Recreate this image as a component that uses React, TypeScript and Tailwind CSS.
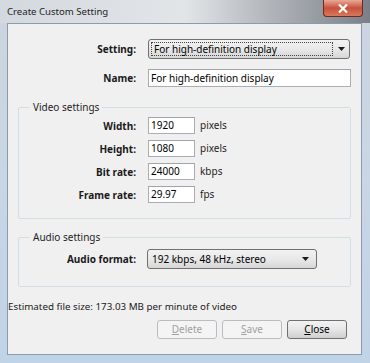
import React from 'react';

const font = { fontFamily: '"Noto Sans", "Open Sans", sans-serif' };

function Label({ children, width }: { children: React.ReactNode; width: string }) {
  return <div className={`${width} text-right font-bold text-[10px] leading-none text-[#1a1a1a]`}>{children}</div>;
}

function TextBox({ value, className }: { value: string; className: string }) {
  return (
    <div className={`${className} flex items-center border border-[#abadb3] border-t-[#a0a3aa] bg-white pl-[2px] text-[10px] text-black`}>
      {value}
    </div>
  );
}

function ComboArrow() {
  return (
    <svg width="7" height="4" viewBox="0 0 7 4">
      <path d="M0 0h7L3.5 4z" fill="#1c1c1c" />
    </svg>
  );
}

function WinButton({ label, accel, disabled }: { label: string; accel: string; disabled?: boolean }) {
  const rest = label.slice(1);
  return (
    <div
      className={
        disabled
          ? 'w-[60px] h-[19px] rounded-[3px] border border-[#b9bdc1] bg-[#f4f4f4] flex items-center justify-center text-[10px] text-[#a0a0a0]'
          : 'w-[60px] h-[19px] rounded-[3px] border border-[#707070] bg-gradient-to-b from-[#f3f3f3] via-[#e6e6e6] to-[#cfcfcf] flex items-center justify-center text-[10px] text-black'
      }
    >
      <span>
        <span className="underline">{accel}</span>
        {rest}
      </span>
    </div>
  );
}

export default function App() {
  const videoRows = [
    { label: 'Width:', value: '1920', unit: 'pixels' },
    { label: 'Height:', value: '1080', unit: 'pixels' },
    { label: 'Bit rate:', value: '24000', unit: 'kbps' },
    { label: 'Frame rate:', value: '29.97', unit: 'fps' },
  ];

  return (
    <div
      className="w-[370px] h-[363px] flex flex-col bg-gradient-to-b from-[#cdd5de] via-[#c8d6e5] to-[#c1d3e7] overflow-hidden"
      style={font}
    >
      {/* title bar */}
      <div className="h-[23px] flex items-start bg-gradient-to-r from-[#d4d9df] via-[#e2e5e8] to-[#7b8088]">
        <div className="pl-[7px] pt-[5px] text-[9.6px] leading-[14px] text-[#1e1e1e]">Create Custom Setting</div>
        <div className="ml-auto mr-[7px] w-[40px] h-[17px] rounded-b-[4px] border border-t-0 border-[#6b2a22] bg-gradient-to-b from-[#e9a898] via-[#c8503a] to-[#d8785a] flex items-center justify-center">
          <svg width="10" height="9" viewBox="0 0 10 9">
            <path d="M1 0.5L9 8.5M9 0.5L1 8.5" stroke="white" strokeWidth="2.2" />
          </svg>
        </div>
      </div>

      {/* client area */}
      <div className="flex-1 ml-[7px] mr-[8px] mb-[8px] border border-[#8a9bb0] bg-[#f1f0f0] flex flex-col">
        {/* Setting */}
        <div className="mt-[15px] flex items-center">
          <Label width="w-[128px]">Setting:</Label>
          <div className="ml-[12px] w-[202px] h-[20px] rounded-[3px] border border-[#707070] bg-gradient-to-b from-[#f2f2f2] via-[#e9e9e9] to-[#d6d6d6] flex items-center">
            <div className="ml-[2px] w-[182px] h-[14px] border border-dotted border-[#444] flex items-center pl-[2px] text-[10px] text-black">
              For high-definition display
            </div>
            <div className="flex-1 flex justify-center">
              <ComboArrow />
            </div>
          </div>
        </div>

        {/* Name */}
        <div className="mt-[10px] flex items-center">
          <Label width="w-[128px]">Name:</Label>
          <TextBox value="For high-definition display" className="ml-[12px] w-[203px] h-[18px]" />
        </div>

        {/* Video settings */}
        <fieldset className="mt-[13px] ml-[10px] w-[333px] border border-[#d3dde4] rounded-[2px] pb-[15px]">
          <legend className="ml-[11px] px-[3px] text-[10px] leading-[14px] text-[#1e1e1e]">Video settings</legend>
          <div className="mt-[3px] flex flex-col gap-[6px]">
            {videoRows.map((r) => (
              <div key={r.label} className="flex items-center h-[17px]">
                <Label width="w-[117px]">{r.label}</Label>
                <TextBox value={r.value} className="ml-[12px] w-[47px] h-[17px]" />
                <div className="ml-[5px] text-[10px] text-[#1e1e1e]">{r.unit}</div>
              </div>
            ))}
          </div>
        </fieldset>

        {/* Audio settings */}
        <fieldset className="mt-[11px] ml-[10px] w-[333px] border border-[#d3dde4] rounded-[2px] pb-[17px]">
          <legend className="ml-[11px] px-[3px] text-[10px] leading-[14px] text-[#1e1e1e]">Audio settings</legend>
          <div className="mt-[5px] flex items-center">
            <Label width="w-[117px]">Audio format:</Label>
            <div className="ml-[11px] w-[170px] h-[20px] rounded-[3px] border border-[#707070] bg-gradient-to-b from-[#f2f2f2] via-[#e9e9e9] to-[#d6d6d6] flex items-center pl-[4px] pr-[7px] text-[10px] text-black">
              <span>192 kbps, 48 kHz, stereo</span>
              <span className="ml-auto flex">
                <ComboArrow />
              </span>
            </div>
          </div>
        </fieldset>

        <div className="mt-[13px] text-[9.8px] leading-[14px] text-[#1a1a1a]">
          Estimated file size: 173.03 MB per minute of video
        </div>

        <div className="mt-[6px] mr-[14px] flex justify-end gap-[5px]">
          <WinButton label="Delete" accel="D" disabled />
          <WinButton label="Save" accel="S" disabled />
          <WinButton label="Close" accel="C" />
        </div>
      </div>
    </div>
  );
}
